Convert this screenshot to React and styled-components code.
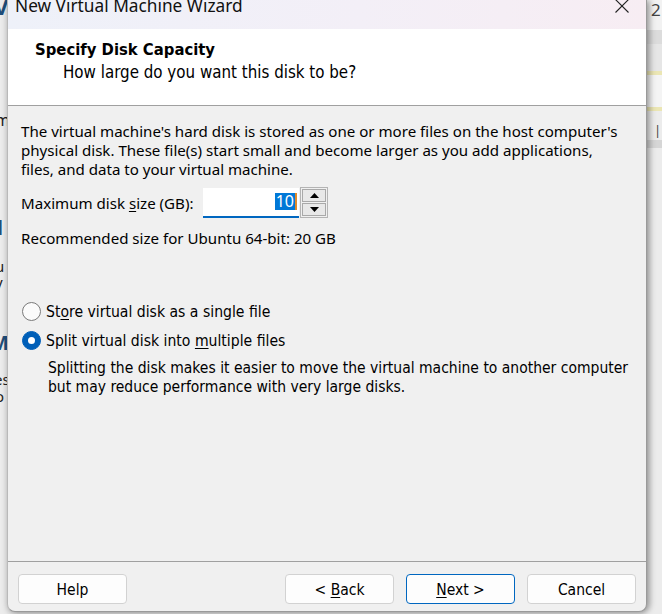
import React from "react";
import styled, { createGlobalStyle } from "styled-components";

const Global = createGlobalStyle`
  html, body { margin: 0; padding: 0; background: #e8e8e8; }
  * { box-sizing: border-box; }
`;

const Desktop = styled.div`
  position: relative;
  width: 662px;
  height: 614px;
  overflow: hidden;
  background: #ececec;
  padding-left: 7px;
  font-family: "Noto Sans", "DejaVu Sans", sans-serif;
`;

const BackLayer = styled.div`
  position: absolute;
  inset: 0;
  pointer-events: none;
`;

const Frag = styled.span`
  position: absolute;
  left: ${(p) => p.$x}px;
  top: ${(p) => p.$y}px;
  font-family: "Noto Sans", sans-serif;
  font-size: ${(p) => p.$size || 15}px;
  font-weight: ${(p) => (p.$bold ? 700 : 400)};
  color: ${(p) => p.$color || "#222"};
  line-height: 0.8;
`;

const BackStrip = styled.div`
  position: absolute;
  left: 647px;
  right: 0;
  top: ${(p) => p.$y}px;
  height: ${(p) => p.$h}px;
  background: ${(p) => p.$bg};
  border-top: ${(p) => p.$bt || "none"};
  border-bottom: ${(p) => p.$bb || "none"};
`;

const Dialog = styled.div`
  position: relative;
  width: 640px;
  height: 612px;
  display: flex;
  flex-direction: column;
  background: #f0f0f0;
  border-left: 1px solid #b9b9b9;
  border-right: 1px solid #9a9a9a;
  border-bottom: 1px solid #9a9a9a;
  border-radius: 0 0 8px 8px;
  box-shadow: 3px 0 6px rgba(0, 0, 0, 0.28), 0 2px 6px rgba(0, 0, 0, 0.2);
  overflow: hidden;
`;

const TitleBar = styled.div`
  height: 29px;
  flex: none;
  display: flex;
  align-items: flex-start;
  justify-content: space-between;
  background: linear-gradient(90deg, #eef1f9 0%, #f3eff7 55%, #f7edf3 100%);
  padding: 0 16px 0 7px;
`;

const TitleText = styled.div`
  font-family: "Noto Sans", sans-serif;
  font-size: 17.3px;
  color: #111;
  line-height: 1;
  margin-top: -3px;
`;

const CloseIcon = styled.svg`
  width: 16px;
  height: 16px;
  margin-top: -2px;
`;

const Header = styled.div`
  height: 77px;
  flex: none;
  background: #ffffff;
  border-bottom: 1px solid #a0a0a0;
  padding: 10px 0 0 27px;
  display: flex;
  flex-direction: column;
`;

const HeaderTitle = styled.div`
  font-family: "DejaVu Sans Condensed", "DejaVu Sans", sans-serif;
  font-weight: 700;
  font-size: 16.5px;
  color: #000;
  line-height: 21px;
`;

const HeaderSub = styled.div`
  font-family: "DejaVu Sans Condensed", "DejaVu Sans", sans-serif;
  font-size: 16.8px;
  color: #000;
  line-height: 21px;
  margin: 2px 0 0 28px;
`;

const Body = styled.div`
  flex: 1;
  display: flex;
  flex-direction: column;
  padding: 16px 14px 0 13px;
`;

const Para = styled.p`
  margin: 0;
  font-family: "Noto Sans", sans-serif;
  font-size: 15.1px;
  line-height: 19px;
  color: #000;
  white-space: nowrap;
`;

const SizeRow = styled.div`
  display: flex;
  align-items: center;
  margin-top: 8px;
  height: 31px;
`;

const Label = styled.span`
  font-family: "Noto Sans", sans-serif;
  font-size: 15.1px;
  color: #000;
  width: 182px;
  white-space: nowrap;
`;

const U = styled.span`
  text-decoration: underline;
  text-underline-offset: 2px;
`;

const NumBox = styled.div`
  width: 96px;
  height: 30px;
  background: #fff;
  border-bottom: 2px solid #0067c0;
  display: flex;
  align-items: center;
  justify-content: flex-end;
  padding-right: 2px;
`;

const Selected = styled.span`
  background: #0078d7;
  color: #fff;
  font-family: "Noto Sans", sans-serif;
  font-size: 16px;
  line-height: 17px;
  padding: 0 1px;
  border-right: 2px solid #e08a2a;
`;

const Spinner = styled.div`
  width: 28px;
  height: 31px;
  border: 1px solid #b4b4b4;
  background: #f0f0f0;
  display: flex;
  flex-direction: column;
  gap: 1px;
  padding: 1px;
  margin-left: 1px;
`;

const SpinBtn = styled.div`
  flex: 1;
  border: 1px solid #a9a9a9;
  background: #e8e8e8;
  display: flex;
  align-items: center;
  justify-content: center;
`;

const Recommend = styled(Para)`
  margin-top: 11px;
`;

const Options = styled.div`
  margin-top: 54px;
  display: flex;
  flex-direction: column;
  gap: 10px;
`;

const RadioRow = styled.label`
  display: flex;
  align-items: center;
  gap: 5px;
  height: 19px;
  padding-left: 1px;
`;

const RadioDot = styled.span`
  width: 19px;
  height: 19px;
  border-radius: 50%;
  flex: none;
  background: ${(p) => (p.$on ? "#005fb8" : "#fbfbfb")};
  border: 1px solid ${(p) => (p.$on ? "#005fb8" : "#7a7a7a")};
  display: flex;
  align-items: center;
  justify-content: center;
  &::after {
    content: "";
    display: ${(p) => (p.$on ? "block" : "none")};
    width: 7px;
    height: 7px;
    border-radius: 50%;
    background: #fff;
  }
`;

const RadioText = styled.span`
  font-family: "DejaVu Sans Condensed", "DejaVu Sans", sans-serif;
  font-size: 15.6px;
  color: #000;
  white-space: nowrap;
`;

const Desc = styled.p`
  margin: 9px 0 0 27px;
  font-family: "DejaVu Sans Condensed", "DejaVu Sans", sans-serif;
  font-size: 15.5px;
  line-height: 19px;
  color: #000;
  white-space: nowrap;
`;

const Footer = styled.div`
  flex: none;
  height: 50px;
  border-top: 1px solid #a0a0a0;
  display: flex;
  align-items: flex-start;
  padding: 12px 10px 0 10px;
  gap: 12px;
`;

const Button = styled.div`
  width: 109px;
  height: 30px;
  border-radius: 4px;
  background: #fdfdfd;
  border: 1px solid ${(p) => (p.$primary ? "#0067c0" : "#d2d2d2")};
  display: flex;
  align-items: center;
  justify-content: center;
  padding-top: 2px;
  white-space: pre;
  font-family: "DejaVu Sans Condensed", "DejaVu Sans", sans-serif;
  font-size: 15.5px;
  color: #000;
  margin-left: ${(p) => p.$ml || 0}px;
`;

export default function App() {
  return (
    <>
      <Global />
      <Desktop>
        <BackLayer>
          <Frag $x={-6} $y={-2} $size={22} $bold $color="#1f4e79">V</Frag>
          <Frag $x={-5} $y={114} $size={16}>m</Frag>
          <Frag $x={-3} $y={220} $size={20} $bold $color="#1f4e79">l</Frag>
          <Frag $x={-5} $y={260} $size={15}>u</Frag>
          <Frag $x={-5} $y={276} $size={15}>y</Frag>
          <Frag $x={-10} $y={335} $size={20} $bold $color="#1f4e79">M</Frag>
          <Frag $x={-6} $y={373} $size={15}>es</Frag>
          <Frag $x={-5} $y={390} $size={15}>o</Frag>
          <BackStrip $y={0} $h={30} $bg="#f2f2f2" />
          <BackStrip $y={30} $h={14} $bg="#dcdcdc" />
          <BackStrip $y={44} $h={27} $bg="#e6e6e6" />
          <BackStrip $y={71} $h={40} $bg="#f4f4f4" $bt="4px solid #ebe6b4" $bb="4px solid #ebe6b4" />
          <BackStrip $y={140} $h={8} $bg="#d6d6d6" />
          <Frag $x={651} $y={3} $size={17} $color="#444">2</Frag>
          <Frag $x={654} $y={125} $size={13} $color="#444">|</Frag>
        </BackLayer>
        <Dialog>
          <TitleBar>
            <TitleText>New Virtual Machine Wizard</TitleText>
            <CloseIcon viewBox="0 0 16 16">
              <path d="M1.5 1.5 L14.5 14.5 M14.5 1.5 L1.5 14.5" stroke="#222" strokeWidth="1.1" fill="none" />
            </CloseIcon>
          </TitleBar>
          <Header>
            <HeaderTitle>Specify Disk Capacity</HeaderTitle>
            <HeaderSub>How large do you want this disk to be?</HeaderSub>
          </Header>
          <Body>
            <Para>
              The virtual machine's hard disk is stored as one or more files on the host computer's
              <br />
              physical disk. These file(s) start small and become larger as you add applications,
              <br />
              files, and data to your virtual machine.
            </Para>
            <SizeRow>
              <Label>
                Maximum disk <U>s</U>ize (GB):
              </Label>
              <NumBox>
                <Selected>10</Selected>
              </NumBox>
              <Spinner>
                <SpinBtn>
                  <svg width="9" height="5" viewBox="0 0 9 5"><path d="M0 5 L4.5 0 L9 5 Z" fill="#000" /></svg>
                </SpinBtn>
                <SpinBtn>
                  <svg width="9" height="5" viewBox="0 0 9 5"><path d="M0 0 L9 0 L4.5 5 Z" fill="#000" /></svg>
                </SpinBtn>
              </Spinner>
            </SizeRow>
            <Recommend>Recommended size for Ubuntu 64-bit: 20 GB</Recommend>
            <Options>
              <RadioRow>
                <RadioDot />
                <RadioText>
                  St<U>o</U>re virtual disk as a single file
                </RadioText>
              </RadioRow>
              <RadioRow>
                <RadioDot $on />
                <RadioText>
                  Split virtual disk into <U>m</U>ultiple files
                </RadioText>
              </RadioRow>
            </Options>
            <Desc>
              Splitting the disk makes it easier to move the virtual machine to another computer
              <br />
              but may reduce performance with very large disks.
            </Desc>
          </Body>
          <Footer>
            <Button>Help</Button>
            <Button $ml={146}>
              {"< "}
              <U>B</U>
              {"ack"}
            </Button>
            <Button $primary>
              <U>N</U>
              {"ext >"}
            </Button>
            <Button>Cancel</Button>
          </Footer>
        </Dialog>
      </Desktop>
    </>
  );
}
